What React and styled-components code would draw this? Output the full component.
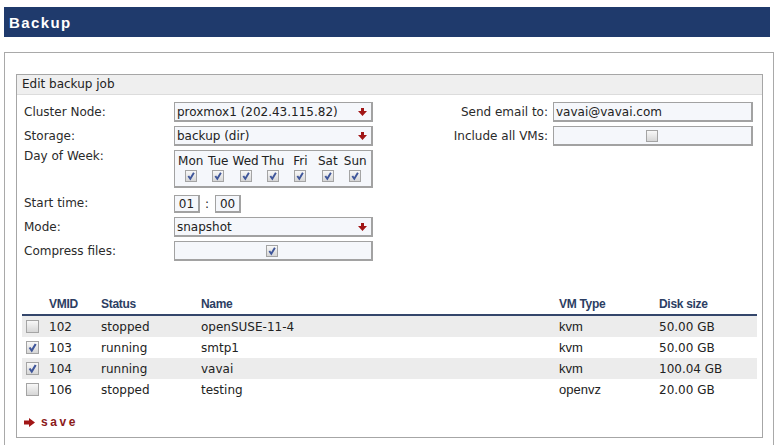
import React from "react";
import styled, { createGlobalStyle } from "styled-components";

const GlobalStyle = createGlobalStyle`
  body {
    margin: 0;
    background: #fff;
    font-family: "DejaVu Sans", sans-serif;
    font-size: 12px;
    color: #222;
  }
`;

const Page = styled.div`
  padding: 7px 0 0 4px;
  width: 770px;
`;

const TitleBar = styled.div`
  width: 766px;
  height: 30px;
  box-sizing: border-box;
  padding-left: 5px;
  display: flex;
  align-items: center;
  background: #1f3a6c;
  color: #fff;
  font: bold 15px "Liberation Sans", Arial, sans-serif;
  letter-spacing: 1.4px;
`;

const Panel = styled.div`
  margin-top: 15px;
  width: 770px;
  box-sizing: border-box;
  border: 1px solid #a9a9a9;
  padding: 21px 10px 10px 11px;
`;

const Fieldset = styled.div`
  border: 1px solid #a6a6a6;
  padding-bottom: 8px;
`;

const Legend = styled.div`
  height: 19px;
  line-height: 19px;
  padding-left: 5px;
  background: #efefef;
  border-bottom: 1px solid #dcdcdc;
`;

const FormArea = styled.div`
  display: flex;
  padding: 7px 9px 0 7px;
`;

const LeftForm = styled.div`
  display: grid;
  grid-template-columns: 150px 199px;
  row-gap: 4px;
`;

const RightForm = styled.div`
  margin-left: auto;
  display: grid;
  grid-template-columns: auto 200px;
  column-gap: 5px;
  row-gap: 4px;
  align-content: start;
`;

const Label = styled.div`
  line-height: ${(p) => (p.$top ? "12px" : "20px")};
  align-self: ${(p) => (p.$top ? "start" : "center")};
  text-align: ${(p) => (p.$right ? "right" : "left")};
  color: #2a2a2a;
`;

const Field = styled.div`
  height: ${(p) => p.$h || 20}px;
  box-sizing: border-box;
  border: 1px solid #a2a2a2;
  border-right-width: 2px;
  border-bottom-width: 2px;
  background: #f5f7fb;
  display: flex;
  align-items: center;
  justify-content: ${(p) => (p.$center ? "center" : "space-between")};
  padding: 0 4px 0 2px;
  white-space: nowrap;
`;

const DaysField = styled(Field)`
  display: grid;
  grid-template-columns: repeat(7, 1fr);
  padding: 3px 2px 2px;
  align-items: start;
`;

const Day = styled.div`
  display: flex;
  flex-direction: column;
  align-items: center;
  gap: 2px;
`;

const TimeRow = styled.div`
  display: flex;
  align-items: center;
  height: 18px;
  margin-top: 3px;
`;

const TimeBox = styled.div`
  width: 26px;
  height: 18px;
  box-sizing: border-box;
  border: 1px solid #a2a2a2;
  border-right-width: 2px;
  border-bottom-width: 2px;
  background: #f5f7fb;
  display: flex;
  align-items: center;
  justify-content: center;
`;

const Colon = styled.span`
  margin: 0 6px 0 5px;
`;

const Box = styled.span`
  display: inline-flex;
  width: ${(p) => p.$size}px;
  height: ${(p) => p.$size}px;
  box-sizing: border-box;
  border: 1px solid #a4a4a4;
  background: linear-gradient(#f8f8f8, #d6d6d6);
  align-items: center;
  justify-content: center;
`;

const Table = styled.div`
  margin: 33px 5px 0 5px;
`;

const cols = "23px 52px 100px 358px 100px 1fr";

const HeadRow = styled.div`
  display: grid;
  grid-template-columns: ${cols};
  height: 22px;
  align-items: center;
  padding-bottom: 1px;
  box-sizing: border-box;
  border-bottom: 2px solid #34466b;
  font: bold 11px "Liberation Sans", Arial, sans-serif;
  letter-spacing: -0.3px;
  color: #2c3e63;
`;

const Row = styled.div`
  display: grid;
  grid-template-columns: ${cols};
  height: 21px;
  align-items: center;
  background: ${(p) => (p.$shade ? "#ececec" : "#fff")};
`;

const Cell = styled.div`
  padding-left: 4px;
  display: flex;
  align-items: center;
  font-family: ${(p) => (p.$sans ? '"Liberation Sans", Arial, sans-serif' : "inherit")};
  font-size: ${(p) => (p.$sans ? "13px" : "12px")};
`;

const SaveLink = styled.div`
  margin: 15px 0 0 7px;
  display: flex;
  align-items: center;
  gap: 6px;
  height: 14px;
  color: #8b1a1a;
  font: bold 12px "Liberation Sans", Arial, sans-serif;
  letter-spacing: 2.6px;
`;

const DownArrow = () => (
  <svg width="9" height="8" viewBox="0 0 9 8">
    <polygon points="3,0 6,0 6,3 9,3 4.5,8 0,3 3,3" fill="#a11616" />
  </svg>
);

const RightArrow = () => (
  <svg width="11" height="9" viewBox="0 0 11 9">
    <polygon points="0,2.5 5,2.5 5,0 11,4.5 5,9 5,6.5 0,6.5" fill="#a11616" />
  </svg>
);

function Check({ checked, size = 12 }) {
  return (
    <Box $size={size}>
      {checked && (
        <svg width={size - 2} height={size - 2} viewBox="0 0 10 10">
          <path d="M2.3 5 L4.3 7.8 L7.9 1.8" stroke="#3f569a" strokeWidth="1.9" fill="none" />
        </svg>
      )}
    </Box>
  );
}

const days = ["Mon", "Tue", "Wed", "Thu", "Fri", "Sat", "Sun"];

const vms = [
  { id: "102", status: "stopped", name: "openSUSE-11-4", type: "kvm", size: "50.00 GB", on: false },
  { id: "103", status: "running", name: "smtp1", type: "kvm", size: "50.00 GB", on: true },
  { id: "104", status: "running", name: "vavai", type: "kvm", size: "100.04 GB", on: true },
  { id: "106", status: "stopped", name: "testing", type: "openvz", size: "20.00 GB", on: false },
];

export default function App() {
  return (
    <Page>
      <GlobalStyle />
      <TitleBar>Backup</TitleBar>
      <Panel>
        <Fieldset>
          <Legend>Edit backup job</Legend>
          <FormArea>
            <LeftForm>
              <Label>Cluster Node:</Label>
              <Field>
                proxmox1 (202.43.115.82)
                <DownArrow />
              </Field>
              <Label>Storage:</Label>
              <Field>
                backup (dir)
                <DownArrow />
              </Field>
              <Label $top>Day of Week:</Label>
              <DaysField $h={38}>
                {days.map((d) => (
                  <Day key={d}>
                    {d}
                    <Check checked />
                  </Day>
                ))}
              </DaysField>
              <Label>Start time:</Label>
              <TimeRow>
                <TimeBox>01</TimeBox>
                <Colon>:</Colon>
                <TimeBox>00</TimeBox>
              </TimeRow>
              <Label>Mode:</Label>
              <Field>
                snapshot
                <DownArrow />
              </Field>
              <Label>Compress files:</Label>
              <Field $center>
                <Check checked />
              </Field>
            </LeftForm>
            <RightForm>
              <Label $right>Send email to:</Label>
              <Field>vavai@vavai.com</Field>
              <Label $right>Include all VMs:</Label>
              <Field $center>
                <Check />
              </Field>
            </RightForm>
          </FormArea>
          <Table>
            <HeadRow>
              <Cell />
              <Cell>VMID</Cell>
              <Cell>Status</Cell>
              <Cell>Name</Cell>
              <Cell>VM Type</Cell>
              <Cell>Disk size</Cell>
            </HeadRow>
            {vms.map((vm, i) => (
              <Row key={vm.id} $shade={i % 2 === 0}>
                <Cell>
                  <Check checked={vm.on} size={13} />
                </Cell>
                <Cell>{vm.id}</Cell>
                <Cell>{vm.status}</Cell>
                <Cell>{vm.name}</Cell>
                <Cell $sans>{vm.type}</Cell>
                <Cell>{vm.size}</Cell>
              </Row>
            ))}
          </Table>
          <SaveLink>
            <RightArrow />
            save
          </SaveLink>
        </Fieldset>
      </Panel>
    </Page>
  );
}
